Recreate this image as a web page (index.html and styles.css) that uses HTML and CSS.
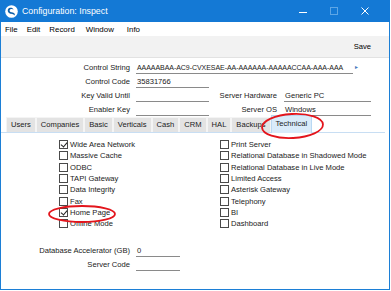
FILE: index.html
```html
<!DOCTYPE html>
<html>
<head>
<meta charset="utf-8">
<link rel="stylesheet" href="styles.css">
</head>
<body>
<div class="window">
  <div class="titlebar">
    <svg class="appicon" width="13" height="13" viewBox="0 0 13 13">
      <circle cx="6.5" cy="6.5" r="6.3" fill="#fff"/>
      <path d="M3 4.2 C4.2 2.4 7.6 2.3 8.6 4.6 C7.2 3.7 5 4 4.6 5.4 C4.3 6.8 6.2 7.2 7.8 7.4 C9.6 7.7 10.4 9.2 9.4 10.6 C8.9 9.4 7.4 9 6 8.8 C3.9 8.5 2.1 6.6 3 4.2 Z" fill="#0f5fa8"/>
    </svg>
    <span class="title">Configuration: Inspect</span>
    <span class="ctrls">
      <span class="ctrl"><svg width="9" height="9" viewBox="0 0 9 9"><path d="M0 5.5 H8" stroke="#fff" stroke-width="1"/></svg></span>
      <span class="ctrl"><svg width="9" height="9" viewBox="0 0 9 9"><rect x="0.5" y="0.5" width="7" height="7" fill="none" stroke="#5ea6e6" stroke-width="1"/></svg></span>
      <span class="ctrl"><svg width="9" height="9" viewBox="0 0 9 9"><path d="M0.5 0.5 L7.5 7.5 M7.5 0.5 L0.5 7.5" stroke="#fff" stroke-width="1"/></svg></span>
    </span>
  </div>
  <div class="menubar">
    <span class="m-file">File</span>
    <span class="m-edit">Edit</span>
    <span class="m-record">Record</span>
    <span class="m-window">Window</span>
    <span>Info</span>
  </div>
  <div class="toolbar"><span class="save">Save</span></div>

  <div class="header">
    <span class="lbl">Control String</span>
    <span class="wide"><span class="fld long">AAAAABAA-AC9-CVXESAE-AA-AAAAAA-AAAAACCAA-AAA-AAA</span><span class="more">&#9658;</span></span>

    <span class="lbl">Control Code</span>
    <span class="fld">35831766</span>
    <span class="lbl2"></span>
    <span class="blank"></span>

    <span class="lbl">Key Valid Until</span>
    <span class="fld"></span>
    <span class="lbl2">Server Hardware</span>
    <span class="fld fld2">Generic PC</span>

    <span class="lbl">Enabler Key</span>
    <span class="fld"></span>
    <span class="lbl2">Server OS</span>
    <span class="fld fld2">Windows</span>
  </div>

  <div class="tabs">
    <span class="tab">Users</span>
    <span class="tab">Companies</span>
    <span class="tab">Basic</span>
    <span class="tab">Verticals</span>
    <span class="tab">Cash</span>
    <span class="tab">CRM</span>
    <span class="tab">HAL</span>
    <span class="tab">Backups</span>
    <span class="tab active">Technical</span>
  </div>

  <div class="panel">
    <div class="checks">
      <div class="col">
        <label class="cb"><span class="box on"></span>Wide Area Network</label>
        <label class="cb"><span class="box"></span>Massive Cache</label>
        <label class="cb"><span class="box"></span>ODBC</label>
        <label class="cb"><span class="box"></span>TAPI Gateway</label>
        <label class="cb"><span class="box"></span>Data Integrity</label>
        <label class="cb"><span class="box"></span>Fax</label>
        <label class="cb"><span class="box on"></span>Home Page</label>
        <label class="cb"><span class="box"></span>Offline Mode</label>
      </div>
      <div class="col">
        <label class="cb"><span class="box"></span>Print Server</label>
        <label class="cb"><span class="box"></span>Relational Database in Shadowed Mode</label>
        <label class="cb"><span class="box"></span>Relational Database in Live Mode</label>
        <label class="cb"><span class="box"></span>Limited Access</label>
        <label class="cb"><span class="box"></span>Asterisk Gateway</label>
        <label class="cb"><span class="box"></span>Telephony</label>
        <label class="cb"><span class="box"></span>BI</label>
        <label class="cb"><span class="box"></span>Dashboard</label>
      </div>
    </div>
    <div class="lower">
      <span class="lbl">Database Accelerator (GB)</span>
      <span class="fld short">0</span>
      <span class="lbl">Server Code</span>
      <span class="fld short"></span>
    </div>
  </div>

  <svg class="marks" width="391" height="291" viewBox="0 0 391 291">
    <ellipse cx="292.5" cy="126" rx="30.5" ry="12" fill="none" stroke="#e3151c" stroke-width="1.8" transform="rotate(-3 292.5 126)"/>
    <ellipse cx="82" cy="214" rx="33" ry="8" fill="none" stroke="#e3151c" stroke-width="1.8"/>
  </svg>
</div>
</body>
</html>
```

FILE: styles.css
```css
* { box-sizing: border-box; }
html, body { margin: 0; padding: 0; background: #fff; }
body {
  width: 391px;
  height: 291px;
  overflow: hidden;
  font-family: "Liberation Sans", Arial, sans-serif;
  color: #1a1a1a;
}
.window {
  position: relative;
  width: 390px;
  height: 290px;
  border: 1px solid #1c7fd6;
  border-top: none;
  background: #fff;
}
.titlebar {
  height: 22px;
  margin: 0 -1px;
  background: #1479d5;
  display: flex;
  align-items: center;
  color: #fff;
}
.appicon { margin-left: 5px; flex: none; }
.title { margin-left: 4px; font-size: 8.8px; }
.ctrls { margin-left: auto; display: flex; margin-right: 9px; }
.ctrl { width: 31px; display: flex; justify-content: center; }
.ctrl svg { display: block; }

.menubar {
  height: 14px;
  display: flex;
  align-items: center;
  font-size: 7.9px;
  color: #000;
  padding-left: 4px;
}
.menubar span { margin-right: 10px; }
.menubar .m-file { margin-right: 9px; }
.menubar .m-edit { margin-right: 9px; }
.menubar .m-record { margin-right: 11px; }
.menubar .m-window { margin-right: 13px; }

.toolbar {
  height: 22px;
  background: #f2f2f2;
  border-bottom: 1px solid #e2e2e2;
  display: flex;
  align-items: center;
  justify-content: flex-end;
  padding-right: 18px;
  font-size: 7.6px;
  color: #000;
}

.header {
  display: grid;
  grid-template-columns: 129px 79px 68px 100px;
  grid-auto-rows: 14px;
  padding-top: 3px;
  font-size: 7.6px;
}
.lbl, .lbl2 {
  text-align: right;
  line-height: 14px;
  white-space: nowrap;
}
.fld {
  align-self: start;
  margin-top: 1px;
  margin-left: 6px;
  height: 12px;
  line-height: 11px;
  border-bottom: 1px solid #8a8a8a;
  padding-left: 1px;
  white-space: nowrap;
  overflow: hidden;
}
.fld2 { margin-left: 7px; margin-right: 6px; }
.wide {
  grid-column: 2 / 5;
  display: flex;
  align-items: flex-start;
}
.fld.long {
  width: 217px;
  flex: none;
  font-size: 7px;
  letter-spacing: -0.05px;
}
.more {
  font-size: 5px;
  line-height: 13px;
  color: #4a7bbd;
  margin-left: 1px;
}

.tabs {
  display: flex;
  margin-top: 1px;
  padding-left: 5px;
  height: 15px;
  border-bottom: 1px solid #c8def3;
  font-size: 7.6px;
  align-items: flex-end;
  margin-right: 4px;
}
.tab {
  height: 15px;
  line-height: 14px;
  padding: 0 4px;
  background: #e3e3e3;
  border: 1px solid #f4f4f4;
  border-bottom: none;
  color: #1a1a1a;
}
.tab.active {
  height: 18px;
  margin-bottom: -1px;
  line-height: 16px;
  background: #d9ebfa;
  border-color: #b9d8f3;
  padding: 0 4px;
}

.panel { padding-top: 6px; }
.checks {
  display: grid;
  grid-template-columns: 161px 160px;
  padding-left: 58px;
  font-size: 7.6px;
}
.col { display: grid; grid-auto-rows: 11.3px; }
.cb {
  display: flex;
  align-items: center;
  white-space: nowrap;
}
.box {
  width: 9px;
  height: 9px;
  border: 1px solid #4a4a4a;
  background: #fff;
  margin-right: 2px;
  position: relative;
  flex: none;
}
.box.on::after {
  content: "";
  position: absolute;
  left: 2px;
  top: 0px;
  width: 3px;
  height: 5px;
  border-right: 1px solid #222;
  border-bottom: 1px solid #222;
  transform: rotate(40deg);
}

.lower {
  display: grid;
  grid-template-columns: 129px 50px;
  grid-auto-rows: 14px;
  margin-top: 15px;
  font-size: 7.6px;
}
.fld.short { width: 44px; }

.marks {
  position: absolute;
  left: -1px;
  top: 0;
  pointer-events: none;
}
```
